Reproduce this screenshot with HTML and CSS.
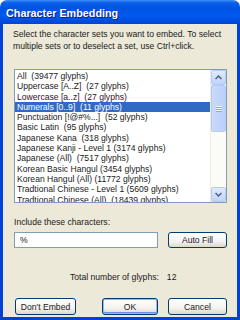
FILE: index.html
```html
<!DOCTYPE html>
<html>
<head>
<meta charset="utf-8">
<link rel="stylesheet" href="styles.css">
</head>
<body>
<div class="window">
  <div class="titlebar"><span class="title">Character Embedding</span></div>
  <div class="body">
    <p class="desc">Select the character sets you want to embed. To select<br>multiple sets or to deselect a set, use Ctrl+click.</p>
    <div class="listbox">
      <ul class="items">
        <li>All&nbsp; (39477 glyphs)</li>
        <li>Uppercase [A..Z]&nbsp; (27 glyphs)</li>
        <li>Lowercase [a..z]&nbsp; (27 glyphs)</li>
        <li class="sel">Numerals [0..9]&nbsp; (11 glyphs)</li>
        <li>Punctuation [!@#%...]&nbsp; (52 glyphs)</li>
        <li>Basic Latin&nbsp; (95 glyphs)</li>
        <li>Japanese Kana&nbsp; (318 glyphs)</li>
        <li>Japanese Kanji - Level 1 (3174 glyphs)</li>
        <li>Japanese (All)&nbsp; (7517 glyphs)</li>
        <li>Korean Basic Hangul (3454 glyphs)</li>
        <li>Korean Hangul (All) (11772 glyphs)</li>
        <li>Tradtional Chinese - Level 1 (5609 glyphs)</li>
        <li>Tradtional Chinese (All)&nbsp; (18439 glyphs)</li>
      </ul>
      <div class="scrollbar">
        <div class="sbtn">
          <svg width="7" height="5" viewBox="0 0 7 5"><path d="M0.5 4 L3.5 1 L6.5 4" fill="none" stroke="#4d6185" stroke-width="1.5"/></svg>
        </div>
        <div class="track">
          <div class="thumb"><div class="grip"></div></div>
        </div>
        <div class="sbtn">
          <svg width="7" height="5" viewBox="0 0 7 5"><path d="M0.5 1 L3.5 4 L6.5 1" fill="none" stroke="#4d6185" stroke-width="1.5"/></svg>
        </div>
      </div>
    </div>
    <div class="label">Include these characters:</div>
    <div class="inrow">
      <div class="input">%</div>
      <button class="btn wide">Auto Fill</button>
    </div>
    <div class="total">Total number of glyphs:<span class="count">12</span></div>
    <div class="buttons">
      <button class="btn">Don't Embed</button>
      <div class="right">
        <button class="btn def">OK</button>
        <button class="btn wide">Cancel</button>
      </div>
    </div>
  </div>
</div>
</body>
</html>
```
FILE: styles.css
```css
html, body {
  margin: 0;
  padding: 0;
  background: #ffffff;
}
.window {
  width: 240px;
  height: 320px;
  display: flex;
  flex-direction: column;
  font-family: "Liberation Sans", Arial, sans-serif;
  font-size: 8.6px;
  color: #1a1a1a;
}
.titlebar {
  height: 24px;
  flex: none;
  border-radius: 7px 7px 0 0;
  background: linear-gradient(to bottom, #3c8cf7 0px, #0a5fe8 3px, #0054e3 8px, #0058ee 16px, #004ddf 21px, #0044cf 24px);
  display: flex;
  align-items: center;
  padding-left: 6px;
}
.title {
  font-family: "Liberation Sans", sans-serif;
  font-weight: bold;
  font-size: 10.8px;
  color: #fff;
  text-shadow: 1px 1px 0 #0a1e7a;
  margin-top: 1px;
}
.body {
  flex: 1;
  background: #ece9d8;
  border: 3px solid #0041d8;
  border-top: none;
  padding: 0 10px 0 11px;
  display: flex;
  flex-direction: column;
}
.desc {
  margin: 4px 0 0 -1px;
  line-height: 12px;
  white-space: nowrap;
}
.listbox {
  margin-top: 17px;
  height: 132px;
  border: 1px solid #7f9db9;
  background: #fff;
  display: flex;
}
.items {
  list-style: none;
  margin: 0;
  padding: 1px 0 0 0;
  flex: 1;
  overflow: hidden;
}
.items li {
  height: 10.3px;
  line-height: 10.3px;
  padding-left: 2px;
  white-space: nowrap;
  font-size: 8.6px;
}
.items li.sel {
  background: #316ac5;
  color: #fff;
}
.scrollbar {
  width: 15px;
  flex: none;
  background: #fbfbf8;
  display: flex;
  flex-direction: column;
  border-left: 1px solid #eeede5;
}
.sbtn {
  height: 15px;
  flex: none;
  box-sizing: border-box;
  border: 1px solid #b6cbf3;
  border-radius: 2px;
  background: linear-gradient(to bottom, #e1eafe, #c1d3fb);
  display: flex;
  align-items: center;
  justify-content: center;
}
.track {
  flex: 1;
  display: flex;
  flex-direction: column;
}
.thumb {
  height: 47px;
  box-sizing: border-box;
  border: 1px solid #b6cbf3;
  border-radius: 2px;
  background: linear-gradient(to right, #cad9fb, #bcd0fa);
  display: flex;
  align-items: center;
  justify-content: center;
}
.grip {
  width: 6px;
  height: 6px;
  background: repeating-linear-gradient(to bottom, #eef3fe 0 1px, #8ca8e5 1px 2px);
}
.label {
  margin-top: 13px;
  line-height: 12px;
}
.inrow {
  margin-top: 4px;
  display: flex;
  align-items: stretch;
  gap: 10px;
}
.input {
  flex: 1;
  height: 16px;
  box-sizing: border-box;
  border: 1px solid #7f9db9;
  background: #fff;
  padding-left: 5px;
  line-height: 15px;
}
.btn {
  font-family: "Liberation Sans", Arial, sans-serif;
  font-size: 8.6px;
  color: #1a1a1a;
  height: 17px;
  padding: 0;
  box-sizing: border-box;
  border: 1px solid #003c74;
  border-radius: 3px;
  background: linear-gradient(to bottom, #ffffff 0%, #f4f3ee 60%, #dcd9cb 100%);
  width: 61px;
  line-height: 14px;
}
.btn.wide {
  width: 59px;
}
.btn.def {
  width: 56px;
  box-shadow: inset 0 0 0 1px #98b8ea, inset 0 -1px 0 1px #6d8ee8;
}
.inrow .btn {
  height: 16px;
}
.total {
  margin-top: 23px;
  padding-left: 56px;
  line-height: 12px;
}
.count {
  margin-left: 8px;
}
.buttons {
  margin-top: 15px;
  display: flex;
  justify-content: space-between;
  padding-left: 1px;
}
.right {
  display: flex;
  gap: 10px;
}
```
